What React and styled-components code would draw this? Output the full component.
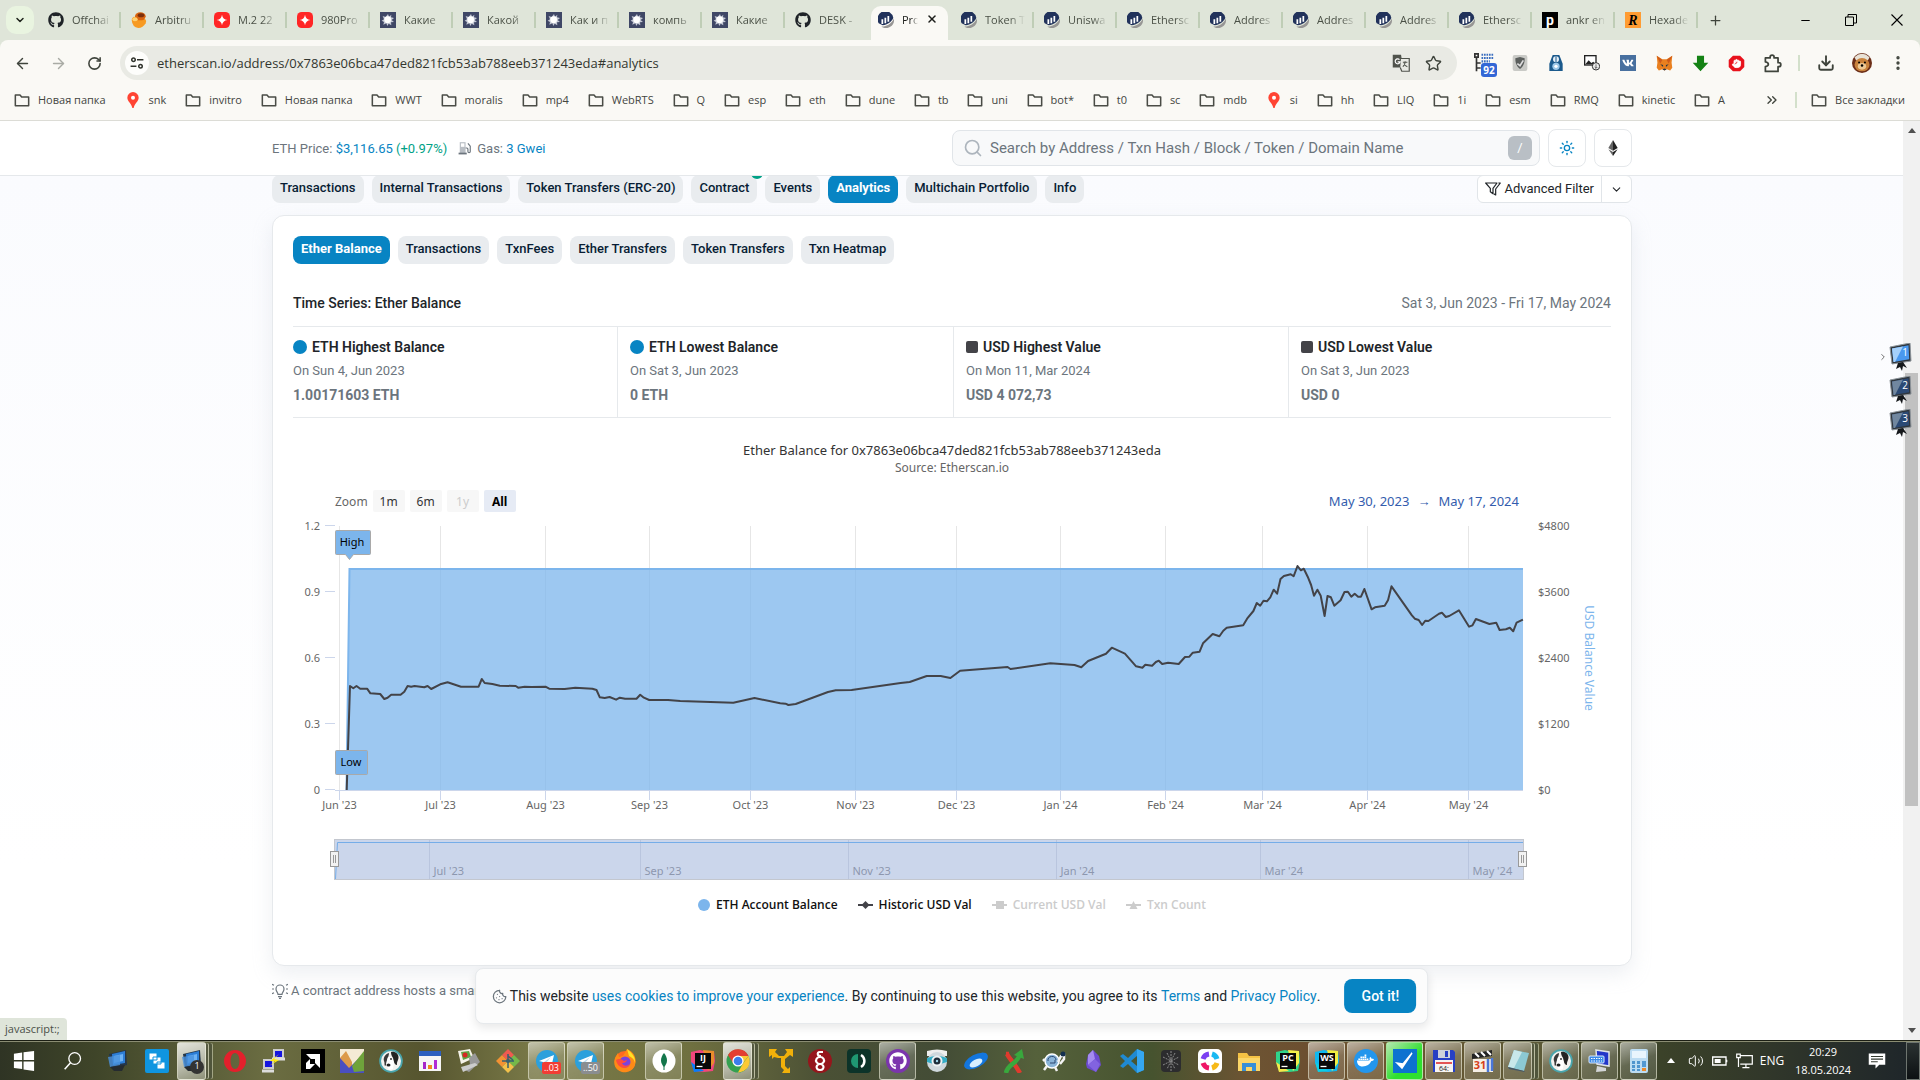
import React from "react";
import styled, { createGlobalStyle, css } from "styled-components";
import {
  ArrowLeft, ArrowRight, RotateCw, ChevronDown, X, Plus, Minus, Star, Download,
  MoreVertical, Search, Sun, Cookie, ChevronsRight, ChevronRight, Volume2, Hand,
} from "lucide-react";
import { FaGithub, FaDocker, FaVk } from "react-icons/fa";

const ui = `"Open Sans", "Noto Sans", sans-serif`;
const site = `Roboto, "Liberation Sans", sans-serif`;
const chartFont = `"Noto Sans", "Open Sans", sans-serif`;

const GlobalStyle = createGlobalStyle`
  *, *::before, *::after { box-sizing: border-box; }
  body { margin: 0; background: #fff; overflow: hidden; }
  button { font: inherit; color: inherit; border: 0; padding: 0; background: none; cursor: pointer; }
  a { text-decoration: none; }
`;

/* ---------- window shell ---------- */

const Desktop = styled.div`
  display: flex;
  flex-direction: column;
  height: 100vh;
  font-family: ${ui};
`;

const TabStrip = styled.div`
  display: flex;
  align-items: stretch;
  height: 40px;
  padding-left: 6px;
  background: #dfe5d9;
`;

const TabSearch = styled.button`
  display: grid;
  place-items: center;
  width: 28px;
  height: 28px;
  margin: 6px 4px 0 0;
  border-radius: 10px;
  background: #e9f4e0;
  color: #1f241c;
`;

const TabShell = styled.div`
  position: relative;
  display: flex;
  align-items: center;
  gap: 8px;
  width: 83px;
  padding-left: 10px;
  font-size: 11px;
  color: #4a5046;
  &::after {
    content: "";
    position: absolute;
    right: 0;
    top: 12px;
    width: 2px;
    height: 16px;
    background: ${(p) => (p.$noRule ? "transparent" : "#bfcdb6")};
  }
  ${(p) => p.$active && css`
    width: 77px;
    margin: 6px 3px 0;
    padding: 0 10px 6px 7px;
    background: #faf9f5;
    border-radius: 10px 10px 0 0;
    color: #1c1e1b;
  `}
`;

const TabTitle = styled.button`
  flex: 1;
  min-width: 0;
  margin-right: ${(p) => (p.$active ? "0" : "9px")};
  overflow: hidden;
  white-space: nowrap;
  text-align: left;
  line-height: 18px;
  mask-image: linear-gradient(90deg, #000 60%, transparent);
`;

const IconButton = styled.button`
  display: grid;
  place-items: center;
  flex: none;
  width: ${(p) => p.$w || 36}px;
  height: ${(p) => p.$h || 36}px;
  color: ${(p) => p.$color || "#3f443c"};
`;

const WindowControls = styled.div`
  display: flex;
  margin-left: auto;
  color: #111;
`;

const ChromeBar = styled.div`
  background: #faf9f5;
  border-bottom: 1px solid #dcdcd6;
  height: 81px;
  border-radius: 8px 8px 0 0;
`;

const ChromeBacking = styled.div`
  background: #dfe5d9;
`;

const NavRow = styled.div`
  display: flex;
  align-items: center;
  height: 46px;
  padding: 0 4px;
`;

const AddressBar = styled.label`
  display: flex;
  align-items: center;
  flex: 1;
  height: 34px;
  margin: 0 9px 0 8px;
  padding: 0 8px 0 5px;
  border-radius: 17px;
  background: #e9eae4;
`;

const SiteInfo = styled.span`
  display: grid;
  place-items: center;
  width: 24px;
  height: 24px;
  margin-right: 8px;
  border-radius: 50%;
  background: #fdfdfb;
`;

const UrlInput = styled.input`
  flex: 1;
  min-width: 0;
  border: 0;
  padding: 0;
  outline: 0;
  background: none;
  font: 13px ${ui};
  color: #33362f;
`;

const Rule = styled.span`
  width: 2px;
  height: 16px;
  margin: 0 ${(p) => p.$m || 8}px;
  background: #d3e0cb;
`;

const ExtIcon = styled.span`
  position: relative;
  display: block;
  width: 20px;
  height: 20px;
`;

const ExtBadge = styled.span`
  position: absolute;
  left: 7px;
  top: 10px;
  width: 16px;
  height: 14px;
  border-radius: 3px;
  background: #3367d6;
  color: #fff;
  font: 700 10px/14px ${ui};
  text-align: center;
`;

const BookmarkRow = styled.div`
  display: flex;
  align-items: center;
  height: 28px;
  padding: 0 15px 0 14px;
`;

const BookmarkList = styled.nav`
  display: flex;
  justify-content: space-between;
  flex: 1;
  margin-right: 38px;
`;

const Bookmark = styled.a`
  display: flex;
  align-items: center;
  gap: 8px;
  font-size: 11px;
  line-height: 16px;
  white-space: nowrap;
  color: #43453f;
`;

/* ---------- page ---------- */

const Viewport = styled.div`
  position: relative;
  display: flex;
  flex: 1;
  min-height: 0;
`;

const Page = styled.div`
  position: relative;
  flex: 1;
  min-width: 0;
  display: flex;
  flex-direction: column;
  font-family: ${site};
  font-size: 14px;
  color: #212529;
  background: #fff;
`;

const Header = styled.header`
  flex: none;
  height: 55px;
  padding-left: 1px;
  border-bottom: 1px solid #e5e8eb;
  background: #fff;
`;

const Container = styled.div`
  max-width: 1360px;
  margin: 0 auto;
`;

const HeaderInner = styled(Container)`
  display: flex;
  align-items: center;
  height: 54px;
`;

const Stat = styled.span`
  display: flex;
  align-items: center;
  gap: 5px;
  margin-right: 11px;
  font-size: 13px;
  white-space: nowrap;
  color: #6c757d;
`;

const Link = styled.a`
  color: ${(p) => p.$color || "#0784c3"};
`;

const SearchBox = styled.label`
  display: flex;
  align-items: center;
  gap: 7px;
  width: 588px;
  height: 36px;
  margin: 0 8px 0 auto;
  padding: 0 7px 0 10px;
  border: 1px solid #e1e5e9;
  border-radius: 8px;
  background: #f8f9fa;
  color: #adb5bd;
`;

const SearchInput = styled.input`
  flex: 1;
  min-width: 0;
  border: 0;
  outline: 0;
  padding: 0;
  background: none;
  font: 15px ${site};
  &::placeholder { color: #6c757d; opacity: 1; }
`;

const Kbd = styled.kbd`
  width: 24px;
  height: 24px;
  border-radius: 6px;
  background: #b9bfc5;
  color: #fff;
  font: 13px/24px ${site};
  text-align: center;
`;

const SquareButton = styled.button`
  display: grid;
  place-items: center;
  width: 38px;
  height: 38px;
  margin-left: ${(p) => (p.$gap ? "8px" : "0")};
  border: 1px solid #e5e8eb;
  border-radius: 8px;
  background: #fff;
  color: #0784c3;
`;

const Body = styled.main`
  flex: 1;
  min-height: 0;
  overflow: hidden;
  padding-left: 1px;
  background: linear-gradient(#fafbfe, #fff 80%);
`;

const Pills = styled.div`
  display: flex;
  gap: 8px;
`;

const Pill = styled.button`
  position: relative;
  height: 28px;
  padding: 0 8px;
  border-radius: 8px;
  background: ${(p) => (p.$active ? "#0784c3" : "#e9ecef")};
  color: ${(p) => (p.$active ? "#fff" : "#081d35")};
  font: ${(p) => (p.$active ? 700 : 500)} 13px/26px ${site};
  padding-bottom: 2px;
  white-space: nowrap;
`;

const Verified = styled.span`
  position: absolute;
  right: -6px;
  top: -8px;
  width: 12px;
  height: 12px;
  border-radius: 50%;
  background: #00a186;
`;

const TopRow = styled.div`
  display: flex;
  justify-content: space-between;
  margin-top: -1px;
`;

const SplitButton = styled.div`
  display: flex;
  height: 28px;
  border: 1px solid #e1e5e9;
  border-radius: 6px;
  background: #fff;
  color: #212529;
  font-size: 13px;
  button { display: flex; align-items: center; gap: 3px; padding: 0 7px 1px; }
  button + button { border-left: 1px solid #e1e5e9; padding: 0 8px; }
`;

const Card = styled.section`
  height: 751px;
  margin-top: 12px;
  padding: 20px;
  border: 1px solid #e6e9ec;
  border-radius: 12px;
  background: #fff;
  box-shadow: 0 8px 19px rgba(189, 197, 209, 0.25);
`;

const SeriesHead = styled.div`
  display: flex;
  justify-content: space-between;
  align-items: center;
  height: 62px;
  padding-top: 16px;
  font-size: 14px;
`;

const SeriesTitle = styled.h2`
  margin: 0;
  font-size: 14px;
  font-weight: 500;
`;

const Muted = styled.span`
  color: #6c757d;
`;

const Figures = styled.div`
  display: grid;
  grid-template-columns: 324fr 336fr 335fr 323fr;
  height: 92px;
  border: solid #e6e9ec;
  border-width: 1px 0;
`;

const Figure = styled.div`
  display: flex;
  flex-direction: column;
  padding: 8px 12px 0;
  line-height: 24px;
  &:first-child { padding-left: 0; }
  & + & { border-left: 1px solid #e6e9ec; }
`;

const FigureName = styled.strong`
  display: flex;
  align-items: center;
  gap: 5px;
  font-size: 14px;
  font-weight: 600;
  &::before {
    content: "";
    width: ${(p) => (p.$square ? 12 : 14)}px;
    height: ${(p) => (p.$square ? 12 : 14)}px;
    border-radius: ${(p) => (p.$square ? "2px" : "50%")};
    background: ${(p) => (p.$square ? "#434348" : "#0784c3")};
  }
`;

const FigureDate = styled.span`
  font-size: 13px;
  color: #6c757d;
`;

const FigureValue = styled.span`
  font-size: 14px;
  font-weight: 700;
  color: #6c757d;
`;

const Chart = styled.figure`
  margin: 0;
  padding-top: 23px;
  font-family: ${chartFont};
`;

const ChartTitle = styled.figcaption`
  text-align: center;
  font-size: 13px;
  line-height: 18px;
  color: #333;
  div + div { font-size: 12px; color: #666; }
`;

const RangeBar = styled.div`
  display: flex;
  align-items: center;
  gap: 5px;
  margin: 13px 92px 2px 42px;
  font-size: 12px;
  color: #666;
`;

const RangeButton = styled.button`
  width: 32px;
  height: 22px;
  border-radius: 2px;
  background: ${(p) => (p.$active ? "#e6ebf5" : "#f7f7f7")};
  color: ${(p) => (p.$active ? "#000" : p.disabled ? "#ccc" : "#333")};
  font-weight: ${(p) => (p.$active ? 700 : 400)};
`;

const DateButtons = styled.div`
  display: flex;
  gap: 8px;
  margin-left: auto;
  font-size: 13px;
  line-height: 20px;
  color: #335cad;
`;

const Plot = styled.svg`
  display: block;
  width: 100%;
  font-family: ${chartFont};
  font-size: 11px;
  fill: #666;
`;

const Legend = styled.div`
  display: flex;
  justify-content: center;
  gap: 20px;
  margin-top: 6px;
`;

const LegendItem = styled.button`
  display: flex;
  align-items: center;
  gap: 6px;
  font: 600 12px/18px ${ui};
  color: ${(p) => (p.$off ? "#ccc" : "#111")};
`;

const Note = styled.p`
  display: flex;
  align-items: center;
  gap: 3px;
  margin: 15px 0 0;
  font-size: 13px;
  line-height: 20px;
  white-space: nowrap;
  color: #6c757d;
`;

const CookieBar = styled.div`
  position: absolute;
  left: 50%;
  bottom: 16px;
  transform: translateX(-50%);
  display: flex;
  align-items: center;
  gap: 24px;
  height: 56px;
  padding: 0 11px 0 16px;
  border: 1px solid #e6e9ec;
  border-radius: 8px;
  background: #fcfcfc;
  box-shadow: 0 4px 10px rgba(0, 0, 0, 0.09);
  white-space: nowrap;
  p { display: flex; align-items: center; margin: 0; font-size: 14px; white-space: pre; }
`;

const Primary = styled.button`
  width: 72px;
  height: 34px;
  border-radius: 8px;
  background: #0784c3;
  color: #fff;
  font-weight: 500;
`;

const StatusBubble = styled.div`
  position: absolute;
  left: 0;
  bottom: 0;
  height: 22px;
  padding: 0 7px 0 5px;
  border-radius: 0 4px 0 0;
  background: #dfe5da;
  color: #4b5048;
  font: 11px/22px ${ui};
`;

const ScrollTrack = styled.div`
  display: flex;
  flex-direction: column;
  justify-content: space-between;
  align-items: center;
  width: 17px;
  padding: 7px 0;
  background: linear-gradient(#c1c1c1, #c1c1c1) 2px 252px / 13px 433px no-repeat #f1f1f1;
`;

const DeskSwitcher = styled.div`
  position: absolute;
  right: 7px;
  top: 222px;
  display: flex;
  flex-direction: column;
  align-items: flex-end;
  gap: 5px;
  span { display: flex; align-items: center; color: #555; }
`;

/* ---------- taskbar ---------- */

const Taskbar = styled.footer`
  display: flex;
  align-items: center;
  height: 40px;
  border-top: 1px solid #1c1f14;
  box-shadow: inset 0 1px 0 #8a8c72;
  background: linear-gradient(90deg, #2f3424 0, #3f4529 5%, #6b6d42 14%, #56552f 22%, #7a7a48 28%, #6f7040 36%,
    #4a5035 43%, #434c36 49%, #55613b 54%, #46532f 60%, #6d5433 65%, #6c4f30 68%, #6b552f 72%, #5d5a37 80%, #3c4329 86%, #31372a 92%, #20272a 99%);
`;

const Cell = styled.button`
  display: grid;
  place-items: center;
  flex: none;
  width: ${(p) => p.$w || 39}px;
  height: 38px;
`;

const Running = styled.span`
  position: relative;
  display: grid;
  place-items: center;
  width: 37px;
  height: 38px;
  border: 1px solid rgba(235, 235, 215, 0.6);
  border-radius: 3px;
  background: ${(p) => p.$green ? "linear-gradient(135deg, #b5e8b0, #2fe02f 60%)"
    : p.$lit ? "linear-gradient(160deg, #e3e4dc, #b5b7a6 60%, #8d9078)"
    : "linear-gradient(160deg, rgba(255,255,255,.55), rgba(255,255,255,.18) 50%, rgba(255,255,255,.12))"};
  ${(p) => p.$stack && css`
    width: 29px;
    margin-right: 8px;
    box-shadow: 3px 0 0 -1px rgba(60, 65, 40, .8), 4px 0 0 -1px #b9bb9f, 7px 0 0 -1px rgba(60, 65, 40, .8), 8px 0 0 -1px #a2a585;
  `}
`;

const CountBadge = styled.span`
  position: absolute;
  right: ${(p) => (p.$round ? 1 : 3)}px;
  bottom: 5px;
  height: ${(p) => (p.$round ? 14 : 12)}px;
  min-width: 14px;
  padding: 0 2px;
  border-radius: ${(p) => (p.$round ? "7px" : "2px")};
  background: ${(p) => p.$bg};
  color: #fff;
  font: 9px/12px ${ui};
`;

const Tray = styled.div`
  display: flex;
  align-items: center;
  margin-left: auto;
  height: 38px;
  color: #fff;
  font-size: 12px;
`;

const Clock = styled.time`
  width: 70px;
  margin-right: 10px;
  text-align: center;
  font-size: 11px;
  line-height: 18px;
`;

const ShowDesktop = styled.button`
  width: 14px;
  height: 38px;
  margin-left: 20px;
  border: 1px solid #6e7570;
  background: linear-gradient(#2b3232, #0c1012);
`;

/* ---------- icons ---------- */

const I = ({ s = 24, children, ...r }) => <svg width={s} height={s} viewBox="0 0 24 24" aria-hidden="true" {...r}>{children}</svg>;

const EtherscanLogo = () => (
  <I s={16}>
    <path d="M1 17A12 12 0 1 1 23 9c-3 6-9 10-16 11" fill="#21325b" />
    <path d="M23.8 10A12 12 0 0 1 5 21.800c9 0 15-5 18.800-11.800z" fill="#979695" />
    <path d="M6.500 11v7M11 8.500v8.500M15.500 6v8.500" stroke="#fff" strokeWidth="2.600" />
  </I>
);
const Spark = () => (
  <I s={16}>
    <rect width="24" height="24" fill="#3f4766" />
    <path d="M12 3l1.500 4L17 4l-.500 4 4.500 1-3.500 3 3.500 3-4.500.500L17 20l-4-2.500L11 21l-1.500-4L5 19l1-4-3.500-2L6 11 4 6l4.500 1.500z" fill="#c6cad6" />
    <circle cx="11.500" cy="11.500" r="5" fill="#fff" />
  </I>
);
const RedStar = () => (
  <I s={16}><rect width="24" height="24" rx="7" fill="#ff2626" /><path d="M12 4q1 7 8 8-7 1-8 8-1-7-8-8 7-1 8-8z" fill="#fff" /></I>
);
const Arbitrum = () => (
  <I s={16}>
    <path d="M1 12q0-3 3-5l17 3q3 3 1 7-4 7-11 7Q2 23 1 12z" fill="#f79a22" />
    <ellipse cx="14" cy="6.500" rx="8" ry="6" fill="#d9630f" />
    <ellipse cx="15" cy="5" rx="5" ry="3" fill="#7c2f0c" /><ellipse cx="6" cy="11" rx="4" ry="3" fill="#ffd070" />
  </I>
);
const LetterIcon = ({ bg, fg, ch, italic }) => (
  <I s={16}>
    <rect width="24" height="24" fill={bg} />
    <text x="12" y="19" textAnchor="middle" fontSize="21" fontWeight="700" fontStyle={italic ? "italic" : "normal"} fontFamily={italic ? "Liberation Serif, serif" : "Roboto, sans-serif"} fill={fg}>{ch}</text>
  </I>
);
const FolderIcon = () => (
  <I s={16}><path d="M2 4.500h7l2.500 3H22v13H2z" fill="none" stroke="#4a4c46" strokeWidth="2.300" strokeLinejoin="round" /></I>
);
const PinIcon = () => (
  <I s={16}><path d="M12 0a8.500 8.500 0 0 0-8.500 8.500C3.500 14 10 17 11 24h2c1-7 7.500-10 7.500-15.500A8.500 8.500 0 0 0 12 0z" fill="#ff4433" /><circle cx="12" cy="8.500" r="3" fill="#fff" /></I>
);
const EthIcon = () => (
  <I s={16}>
    <path d="M12 0L5 12l7 4z" fill="#666" /><path d="M12 0l7 12-7 4z" fill="#222" />
    <path d="M5 14l7 10v-6z" fill="#666" /><path d="M19 14l-7 10v-6z" fill="#222" />
  </I>
);
const PumpIcon = () => (
  <I s={14}>
    <path d="M3 2h10v19H3z" fill="#b9bec4" /><path d="M5 4h6v6H5z" fill="#fff" /><path d="M1 20h14v3H1z" fill="#6c757d" />
    <path d="M13 12h2q2 0 2 2v4q0 2 2 2t2-2V9l-4-5" fill="none" stroke="#6c757d" strokeWidth="2" />
  </I>
);
const FilterIcon = () => (
  <I s={16}>
    <path d="M1 3h17l-6 8v8l-4-3v-5z" fill="none" stroke="#212529" strokeWidth="1.800" strokeLinejoin="round" />
    <path d="M20 3h3l-7 9v9l-3-2" fill="none" stroke="#212529" strokeWidth="1.800" strokeLinejoin="round" />
  </I>
);
const BulbIcon = () => (
  <I s={16}>
    <g fill="none" stroke="#6c757d" strokeWidth="1.800">
      <path d="M9 17c0-3-3-4-3-8a6 6 0 0 1 12 0c0 4-3 5-3 8zM9 20.500h6M10.500 23h3" />
      <path d="M0 2l3 1.500M0 9h3M0 16l3-1.500M24 2l-3 1.500M24 9h-3M24 16l-3-1.500" />
    </g>
  </I>
);
const PuzzleIcon = () => (
  <I s={19}><path d="M3 5h6V4a2.500 2.500 0 0 1 5 0v1h5v6h1a2.500 2.500 0 0 1 0 5h-1v6H3v-6c5-1 5-5 0-6z" fill="none" stroke="#3f443c" strokeWidth="2.200" strokeLinejoin="round" /></I>
);
const TuneIcon = () => (
  <I s={14}><g fill="none" stroke="#30332c" strokeWidth="2.600"><circle cx="6" cy="6.500" r="3" /><path d="M12 6.500h11M1 17.500h10" /><circle cx="18" cy="17.500" r="3" /></g></I>
);
const TranslateIcon = () => (
  <I s={18}>
    <path d="M1 1h11l3 17H1z" fill="#50534c" /><path d="M12 6h11v17H13l-2-5" fill="#e9eae4" stroke="#50534c" strokeWidth="1.600" />
    <path d="M10 7.500a3.300 3.300 0 1 0 .8 3H7.500" fill="none" stroke="#fff" strokeWidth="1.600" />
    <path d="M14.500 11h6M17.500 9.500V11c0 3-2 5-3 6M16 12.500c1 2.500 3 4 4.500 4.500" fill="none" stroke="#50534c" strokeWidth="1.400" />
  </I>
);
const MonitorIcon = ({ n, dim }) => (
  <svg width="25" height="28" viewBox="0 0 25 28" aria-hidden="true">
    <path d="M2 4L22 0l1 18-19 3z" fill="#30363c" stroke="#8d949a" />
    <path d="M4 5.500L20.500 2.300l.7 14L5.500 19z" fill={dim ? "#2c4a75" : "#4a98ee"} />
    <path d="M4 5.500L15 3.400 7 19H5.500z" fill={dim ? "#71879f" : "#a5d0fa"} />
    <path d="M10 20l5-1 4 6-4-2-1 5-2-4-4 2z" fill="#15181b" />
    <text x="17" y="13" textAnchor="middle" fontSize="10" fill="#fff">{n}</text>
  </svg>
);
const Dog = () => (
  <I>
    <circle cx="12" cy="12" r="11.800" fill="#49a5ad" /><circle cx="12" cy="12" r="10" fill="#f3f1ee" />
    <path d="M12 3c4-1 8 2 7.500 6-.5 3-2 4-1.500 7-3 0-3-4-4-7-1-2-2-3-2-6z" fill="#242424" />
    <path d="M10 4C6 5 4 9 5 12c1 2 0 4 1 5 2-1 1.500-4 2-6s2-4 2-7z" fill="#3a3a3a" />
    <path d="M9 8l4 0 2 6-1 6-4 1-2-3-1-3z" fill="#fff" /><ellipse cx="9.500" cy="16" rx="2" ry="1.500" fill="#222" /><circle cx="12" cy="10" r=".9" fill="#222" />
  </I>
);
const BlueMonitors = () => (
  <I>
    <path d="M3 5L20 1l1 15-16 3z" fill="#24364a" /><path d="M6 5l13-3v12L7 16z" fill="#2d7ed6" />
    <path d="M8 7l9-2v7l-9 2z" fill="#6db3f5" /><path d="M2 8l12-2v10L4 18z" fill="#4a92de" opacity=".8" />
    <path d="M4 18l15-2-3 6H8z" fill="#252b30" />
  </I>
);
const Telegram = () => (
  <I><circle cx="12" cy="12" r="11" fill="#2ba0dc" /><path d="M4 12L19 6l-3 13-5-4-2 2-1-4z" fill="#fff" /><path d="M9 13l7-5-5 6-1 3z" fill="#bcdcf0" /></I>
);
const JetBrains = ({ t, a, b, c }) => (
  <I>
    <path d="M0 3L9 1l8 2 6-1 1 10-2 10-9 1-10-1-3-9z" fill={a} /><path d="M12 1l11 1v12l-6 8z" fill={b} /><path d="M0 13l3 10 10-1z" fill={c} />
    <rect x="4" y="4" width="16" height="16" fill="#090909" />
    <text x="12" y="12" textAnchor="middle" fontSize="9" fontWeight="700" fontFamily="Open Sans, sans-serif" fill="#fff">{t}</text>
    <path d="M5.500 17.500h6" stroke="#fff" strokeWidth="1.300" />
  </I>
);
const icons = {
  win: <I s={22}><path d="M1 4l9-1.300V11H1zM11.500 2.500L23 1v10H11.500zM1 12.500h9v8.300L1 19.500zM11.500 12.500H23v10.500l-11.500-1.600z" fill="#fff" /></I>,
  search: <I s={20}><circle cx="14" cy="9" r="7" fill="none" stroke="#fff" strokeWidth="1.600" /><path d="M9 14l-7 8" stroke="#fff" strokeWidth="1.800" /></I>,
  monitors: <BlueMonitors />,
  cascade: <I><rect width="24" height="24" rx="2" fill="#0f95e0" /><path d="M4 4h8v7H4zM8 8h8v7H8zM12 13h8v7h-8z" fill="#fff" stroke="#0f95e0" /></I>,
  opera: <I><path fillRule="evenodd" d="M12 1a11 11 0 1 0 0 22 11 11 0 0 0 0-22zm0 3c3 0 4.500 4 4.500 8s-1.500 8-4.500 8-4.500-4-4.500-8S9 4 12 4z" fill="#e3202c" /></I>,
  putty: <I><path d="M12 1h9v8h-9zM2 11h9v8H2z" fill="#1414e0" stroke="#ccc" strokeWidth="2" /><path d="M10 10h13M0 22h12" stroke="#ddd" strokeWidth="3" /><path d="M17 5l-9 7 5 .5L7 17l10-6-5-1z" fill="#fde910" /></I>,
  amd: <I><rect width="24" height="24" fill="#000" /><path d="M5 5h14v14l-5-5v-4h-4zM9 10v5h5l-5 5H5v-6z" fill="#fff" /></I>,
  zig: <I><rect width="24" height="24" fill="#f4ead5" /><path d="M0 9l6-7 6 11v11H0z" fill="#dc9a4b" /><path d="M0 9l9 10 9-9 6 4v10H0z" fill="#4a4fc0" /><path d="M12 17L24 2v20l-10 1z" fill="#6fa33b" /></I>,
  dog: <Dog />,
  report: <I><rect x="1" y="2" width="22" height="20" fill="#f5f5f5" /><rect x="1" y="2" width="22" height="5" fill="#2c5fbf" /><path d="M5 13h3v7H5z" fill="#a526c9" /><path d="M10 16h4v4h-4z" fill="#f08a1c" /><path d="M16 11h3v9h-3z" fill="#b129d5" /></I>,
  photo: <I><path d="M1 2l12-2 4 9-13 6z" fill="#f5f2e8" /><path d="M4 3l8-1 2 6-8 3z" fill="#5ea244" /><circle cx="8" cy="6" r="2.500" fill="#d72822" /><path d="M12 9l6-5 5 9-11 10-4-2 5-6z" fill="#999" /><path d="M4 18l14-4 3 2-15 7z" fill="#ccc" /></I>,
  git: <I><path d="M12 0l6 6-6 6-6-6z" fill="#ef5a50" /><path d="M6 6l6 6-6 6-6-6z" fill="#f29233" /><path d="M18 6l6 6-6 6-6-6z" fill="#75b94a" /><path d="M12 12l6 6-6 6-6-6z" fill="#f2c14b" /><path d="M12 5v14M6 12h12M12 7l5 4" stroke="#37606f" strokeWidth="1.500" fill="none" /><circle cx="12" cy="12" r="2" fill="#37606f" /></I>,
  telegram: <Telegram />,
  firefox: <I><circle cx="12" cy="12.500" r="10.500" fill="#ff6a21" /><path d="M14 0c7 3 10 9 8 16-2 6-8 8-13 7C2 21 0 15 2 9l3-5 1 4 4-1z" fill="#ff8a16" /><circle cx="12" cy="13" r="5.500" fill="#7a43dc" /><path d="M14 0c5 4 9 8 8 15 0-5-4-7-6-8z" fill="#ffe226" /><path d="M3 11c3-2 6-1 8 1l3-1c-1 3-4 3-5 3 1 3 6 4 8 0-1 7-12 7-14-3z" fill="#ff4c3e" /></I>,
  mongo: <I><circle cx="12" cy="12" r="11.500" fill="#fff" /><path d="M12 4c4 5 4 10 0 14-4-4-4-9 0-14z" fill="#13764b" /><path d="M12 16v5" stroke="#13764b" /></I>,
  ij: <JetBrains t="IJ" a="#f0457d" b="#e88c2c" c="#087cfa" />,
  chrome: <I><circle cx="12" cy="12" r="11.500" fill="#34a050" /><path d="M2 6A11.500 11.500 0 0 1 22.500 7H12L7 14z" fill="#e33e32" /><path d="M22.500 7A11.500 11.500 0 0 1 12 23.500l5-9z" fill="#fcc934" /><path d="M17 14l5.500-7H12z" fill="#fcc934" /><circle cx="12" cy="12" r="5.600" fill="#fff" /><circle cx="12" cy="12" r="4.300" fill="#3b7ded" /></I>,
  arrows: <I><path d="M0 0h8L6 3l4 4h5l3-4-2-3h8v8l-3-2-5 4v7l3 3 2-2v6h-8l2-3-3-3v-9H9L5 8 3 10V6L0 8z" fill="#f2b10a" /></I>,
  serpent: <I><circle cx="12" cy="12" r="12" fill="#96161c" /><path d="M15 3h-3q-3 0-2 3 1 1 3 1M12 8a4 3.500 0 1 0 .1 0M12 15a3.500 3 0 1 0 .1 0" fill="none" stroke="#fff" strokeWidth="2.200" /></I>,
  half: <I><rect width="24" height="24" rx="4" fill="#0c3329" /><path d="M11 5v14a7 7 0 0 1 0-14z" fill="#1f9772" /><path d="M14 6a7 7 0 0 1 0 12" fill="none" stroke="#fff" strokeWidth="2.500" /></I>,
  robot: <I><path d="M2 2q10-3 20 0v5H2z" fill="#eee" /><circle cx="12" cy="13" r="10" fill="#cfd8dd" /><path d="M2 9q10-4 20 0v4q-10 4-20 0z" fill="#36adc6" /><circle cx="12" cy="12" r="5.500" fill="#eef2f4" /><circle cx="12" cy="12" r="3.500" fill="#1d2c3a" /><circle cx="12" cy="12" r="1.200" fill="#9fd4ea" /></I>,
  lens: <I><ellipse cx="12" cy="12" rx="13" ry="6.500" transform="rotate(-28 12 12)" fill="#1376dd" /><ellipse cx="12" cy="14" rx="7" ry="3.500" transform="rotate(-28 12 14)" fill="#d8efff" /></I>,
  cross: <I><path d="M4 5c3 6 7 8 13 19M3 5h3" stroke="#e03a2d" strokeWidth="4.500" fill="none" /><path d="M3 24C5 14 14 16 17 5" stroke="#39a83d" strokeWidth="4.500" fill="none" /><path d="M11 6l8-6 2 10z" fill="#39a83d" /></I>,
  turtle: <I><circle cx="10" cy="12" r="7" fill="#8ab4d8" stroke="#fff" strokeWidth="1.500" /><path d="M6 12a4 4 0 0 1 8-1M8 14h5v-3" stroke="#2c4770" fill="none" /><path d="M16 13l3-6 3-1v4l-4 5M5 17l-3 4M13 18l2 4M3 10l-2 2" stroke="#f3f3f3" strokeWidth="2.500" fill="none" /><circle cx="21" cy="5" r="2.500" fill="#14304f" /></I>,
  obsidian: <I><path d="M12 1l6 6 2 9-5 7-9-4-1-4 2-9z" fill="#6c4bd0" /><path d="M12 1l2 9-7 6 0-10z" fill="#a58bf0" /><path d="M14 10l5 5-4 8-8-7z" fill="#8263e0" /></I>,
  vscode: <I><path fillRule="evenodd" d="M17 0l7 3v18l-7 3-9-9-5 4-3-2 5-5-5-5 3-2 5 4zM17 7l-6 5 6 5z" fill="#1f8ad2" /><path d="M17 0l7 3v18l-7 3z" fill="#35a7f2" /></I>,
  brain: <I><rect x="2" y="1" width="20" height="22" rx="4" fill="#2c2c2e" /><path d="M12 2v20M4 8l16 8M4 16l16-8M8 4l8 16M16 4L8 20" stroke="#8b8b8b" strokeWidth="1" strokeDasharray="2 1" /></I>,
  wheel: <I><rect width="24" height="24" rx="5" fill="#fff" /><g fill="none" strokeWidth="5"><path d="M5 10a7.500 7.500 0 0 1 6-5" stroke="#7c3ff2" /><path d="M14 5a7.500 7.500 0 0 1 5 5" stroke="#19b9f2" /><path d="M19 14a7.500 7.500 0 0 1-5 5" stroke="#f7b917" /><path d="M11 19a7.500 7.500 0 0 1-6-5" stroke="#ef1767" /></g></I>,
  files: <I><path d="M1 4h9l2 3h11v14H1z" fill="#f5c244" /><path d="M1 9h22v13H1z" fill="#fbd668" /><path d="M5 22v-8h14v8h-4v-4H9v4z" fill="#378fd6" /></I>,
  pc: <JetBrains t="PC" a="#2fd58b" b="#f4f04a" c="#f4e94a" />,
  ws: <JetBrains t="WS" a="#10b8f0" b="#f0ee40" c="#0ad0e8" />,
  check: <I><rect width="24" height="24" fill="#0d72d0" /><path d="M4 14l5 5L19 4l-9 11z" fill="#fff" stroke="#fff" strokeWidth="1.500" /></I>,
  floppy: <I><path d="M1 1h20l2 2v20H1z" fill="#2740c4" /><rect x="6" y="1" width="12" height="8" fill="#cdd2da" /><rect x="13" y="2" width="3" height="6" fill="#2740c4" /><rect x="3" y="11" width="18" height="12" fill="#f7f4f0" /><path d="M4 14h16" stroke="#d22" strokeWidth="1.500" /><text x="12" y="22" textAnchor="middle" fontSize="7" fill="#222">64:</text></I>,
  clap: <I><path d="M1 5l20-4v6L1 10z" fill="#222" /><path d="M4 4l4 4M10 3l4 4M16 2l4 4" stroke="#fff" strokeWidth="2" /><rect x="2" y="10" width="20" height="13" fill="#f5efe6" /><text x="9" y="20" textAnchor="middle" fontSize="11" fontWeight="700" fill="#d5401c">31</text><path d="M17 10v13M21 9v13" stroke="#4a77d8" strokeWidth="2.500" /></I>,
  notes: <I><path d="M8 1l15 3-5 18-16-4z" fill="#8cc9d4" /><path d="M8 1l8 2-8 16-6-1z" fill="#c8e7ea" /><path d="M2 18l16 4 1 1-16-3z" fill="#456" /></I>,
  keyboard: <I><path d="M8 1l13 2v14L9 15z" fill="#2236c8" stroke="#dfe3e8" strokeWidth="1.500" /><rect x="1" y="7" width="15" height="7" rx="1" fill="#3a8ae8" stroke="#dceaff" /><path d="M3 9.500h11M3 12h11" stroke="#fff" strokeDasharray="1.500 1" /><path d="M9 17l9 2v3l-10 1z" fill="#d4d6d8" /></I>,
  calc: <I><rect x="3" y="0" width="18" height="24" rx="2" fill="#bcdcf2" /><rect x="5" y="2" width="14" height="7" fill="#e9f5fd" /><path d="M5 12h3v3H5zM10 12h3v3h-3zM5 16h3v3H5zM10 16h3v3h-3zM5 20h3v2H5zM10 20h3v2h-3z" fill="#4f95ce" /><path d="M15 12h4v6h-4z" fill="#5299d2" /><path d="M15 19h4v3h-4z" fill="#eb8b2d" /></I>,
};

/* ---------- data ---------- */

const gh = <FaGithub size={16} color="#1f2328" />;
const tabs = [
  ["Offchai", gh], ["Arbitru", <Arbitrum />], ["M.2 22", <RedStar />], ["980Pro", <RedStar />], ["Какие", <Spark />],
  ["Какой", <Spark />], ["Как и п", <Spark />], ["компь", <Spark />], ["Какие", <Spark />], ["DESK -", gh],
  ["Pro", <EtherscanLogo />], ["Token T", <EtherscanLogo />], ["Uniswa", <EtherscanLogo />], ["Ethersc", <EtherscanLogo />],
  ["Addres", <EtherscanLogo />], ["Addres", <EtherscanLogo />], ["Addres", <EtherscanLogo />], ["Ethersc", <EtherscanLogo />],
  ["ankr en", <LetterIcon bg="#000" fg="#fff" ch="p" />], ["Hexade", <LetterIcon bg="#ff9c33" fg="#000" ch="R" italic />],
];
const ACTIVE = 10;

const bookmarks = ["Новая папка", "snk", "invitro", "Новая папка", "WWT", "moralis", "mp4", "WebRTS", "Q", "esp", "eth", "dune", "tb", "uni",
  "bot*", "t0", "sc", "mdb", "si", "hh", "LIQ", "1i", "esm", "RMQ", "kinetic", "A"];

const extensions = [
  ["Downloader", <ExtIcon><I s={20}><path d="M1 1h4v4H1zM3 5v17M3 12h5M3 18h5" stroke="#333" strokeWidth="2" fill="none" /><path d="M9 2h14M9 6h14M9 10h10" stroke="#3b6fc0" strokeWidth="2.500" strokeDasharray="2 1" /></I><ExtBadge>92</ExtBadge></ExtIcon>],
  ["Shield", <I s={16}><rect x="1" width="22" height="24" rx="3" fill="#c9cac6" /><path d="M5 5l7-2 7 2c0 8-2 12-7 16C7 17 5 13 5 5z" fill="#5b5f5d" /><path d="M8 13l4 3 5-8" stroke="#ddd" strokeWidth="2.500" fill="none" /></I>],
  ["Wallet", <I s={16}><path d="M7 0h10l5 13v11H2V13z" fill="#1b5a8c" /><circle cx="12" cy="6.500" r="4.500" fill="#e5eff7" /><path d="M12 2v9" stroke="#1b5a8c" strokeWidth="1.500" /><circle cx="12" cy="17" r="5.500" fill="#9cc8e8" /><circle cx="12" cy="17" r="2.500" fill="#fff" /></I>],
  ["Images", <I s={16}><rect x="1" y="1" width="17" height="14" fill="#fff" stroke="#222" strokeWidth="2" /><path d="M2 14l5-6 4 4 3-2 3 4z" fill="#222" /><circle cx="18" cy="17" r="5.500" fill="#eee" stroke="#333" strokeWidth="1.500" /><path d="M18 14v6M16 18l2 2 2-2" stroke="#333" fill="none" /></I>],
  ["VK", <I s={16}><rect width="24" height="24" fill="#48709f" /><g transform="translate(3 3)"><FaVk size={18} color="#fff" /></g></I>],
  ["Fox wallet", <I s={17}><path d="M1 1l8 5h6l8-5-1 10 1 7-3 4-5-2-3 2-3-2-5 2-3-4 1-7z" fill="#e9801f" /><path d="M1 1l8 6-3 5zM23 1l-8 6 3 5z" fill="#cf5a1a" /><path d="M6 13l4 1v3zM18 13l-4 1v3zM9 20l3-1 3 1-3 2z" fill="#243447" /></I>],
  ["Save", <I s={17}><path d="M7 1h10v10h6L12 23 1 11h6z" fill="#148214" /></I>],
  ["Adblock", <I s={17}><path d="M7 1h10l6 6v10l-6 6H7l-6-6V7z" fill="#e8121c" /><g transform="translate(5 5)"><Hand size={14} color="#fff" fill="#fff" /></g></I>],
];

const pageTabs = ["Transactions", "Internal Transactions", "Token Transfers (ERC-20)", "Contract", "Events", "Analytics", "Multichain Portfolio", "Info"];
const chartTabs = ["Ether Balance", "Transactions", "TxnFees", "Ether Transfers", "Token Transfers", "Txn Heatmap"];
const figures = [
  ["ETH Highest Balance", "On Sun 4, Jun 2023", "1.00171603 ETH"],
  ["ETH Lowest Balance", "On Sat 3, Jun 2023", "0 ETH"],
  ["USD Highest Value", "On Mon 11, Mar 2024", "USD 4 072,73", true],
  ["USD Lowest Value", "On Sat 3, Jun 2023", "USD 0", true],
];

const months = [[339.5, "Jun '23"], [440.5, "Jul '23"], [545.5, "Aug '23"], [649.5, "Sep '23"], [750.5, "Oct '23"], [855.5, "Nov '23"],
  [956.5, "Dec '23"], [1060.5, "Jan '24"], [1165.5, "Feb '24"], [1262.5, "Mar '24"], [1367.5, "Apr '24"], [1468.5, "May '24"]];
const levels = [[526, "1.2", "$4800"], [592, "0.9", "$3600"], [658, "0.6", "$2400"], [724, "0.3", "$1200"], [790, "0", "$0"]];
const navMonths = [[429.5, "Jul '23"], [640.5, "Sep '23"], [848.5, "Nov '23"], [1056.5, "Jan '24"], [1260.5, "Mar '24"], [1468.5, "May '24"]];

/* Historic USD value: each run has its own sampling step along x. */
const runs = [
  { x0: 270, step: 2.45, pts: "188,1080 196,768 204,775 212,768 221,776 238,776 246,790 270,792 280,807 288,803 297,794 320,794 329,785 337,768 346,770 354,768 378,772 386,768 395,777 417,763 435,757 468,770 511,770 519,747 526,759 545,762 563,767 602,768 608,773 624,770 640,771 675,770 684,776 722,777 748,773 790,776 800,780 808,802 820,804 832,801 848,809 857,803 870,806 898,806 907,794 916,803 929,810 975,810 1005,813 1135,818 1187,804 1250,820 1263,821 1270,825 1288,822 1367,786 1386,781 1425,780 1545,759" },
  { x0: 900, step: 2.063, pts: "20,756 55,738 84,738 104,744 124,722 222,711 228,717 310,700 360,705 374,712 388,693 425,671 437,653 464,671 487,709 500,713 506,704 520,707 528,696 534,692 541,702 553,698 575,702 588,681 597,680 604,668 618,665 625,640 645,612 659,619 667,602 674,593 708,586 716,566 729,543 736,519 743,527 750,512 757,514 764,502 771,479 778,491 785,447 792,438 806,433 812,439 820,408 827,421 833,416 841,440 848,465 854,497 861,479 868,497 876,558 882,498 889,502 896,527 909,511 917,486 924,485 931,500 938,491 945,500 951,500 958,477 973,538 980,532 1000,527 1007,510 1014,469 1056,556 1062,566 1070,570 1077,585 1084,572 1090,573 1112,551 1118,548 1126,561 1133,558 1153,541 1174,590 1181,586 1188,567 1216,582 1230,578 1237,600 1250,598 1258,593 1265,604 1272,578 1285,569" },
];
const usdLine = runs.flatMap((r) => r.pts.split(" ").map((p) => {
  const [x, y] = p.split(",").map(Number);
  return `${(r.x0 + x / r.step).toFixed(1)},${(430 + y / 3).toFixed(1)}`;
})).join(" ");

const taskCells = [
  ["monitors"], ["cascade"], ["monitors", { stack: 1, lit: 1, badge: "1", bg: "#333", round: 1 }], ["opera"], ["putty"], ["amd"], ["zig"], ["dog"], ["report"], ["photo"], ["git"],
  ["telegram", { badge: "..03", bg: "#f23c34" }], ["telegram", { badge: "..50", bg: "#8a8d90" }], ["firefox"], ["mongo", {}], ["ij"], ["chrome", { stack: 1, lit: 1 }],
  ["arrows"], ["serpent"], ["half"], ["github", {}], ["robot"], ["lens"], ["cross"], ["turtle"], ["obsidian"], ["vscode"], ["brain"], ["wheel"], ["files"], ["pc"],
  ["ws", {}], ["docker", {}], ["check", { green: 1 }], ["floppy", {}], ["clap", {}], ["notes", { stack: 1 }], ["dog", {}], ["keyboard", {}], ["calc", {}],
];

const PurpleDisc = styled.span`
  display: grid;
  place-items: center;
  width: 24px;
  height: 24px;
  border-radius: 50%;
  background: #7b35ad;
`;
const BlueDisc = styled(PurpleDisc)`
  background: #2396ed;
`;
const glyph = (name) =>
  name === "github" ? <PurpleDisc><FaGithub size={18} color="#fff" /></PurpleDisc>
  : name === "docker" ? <BlueDisc><FaDocker size={17} color="#fff" /></BlueDisc>
  : icons[name];

/* ---------- sections ---------- */

function BrowserTop() {
  return (
    <ChromeBacking>
      <TabStrip>
        <TabSearch aria-label="Search tabs"><ChevronDown size={12} strokeWidth={3} /></TabSearch>
        {tabs.map(([t, ic], i) => (
          <TabShell key={i} $active={i === ACTIVE} $noRule={i === ACTIVE || i === ACTIVE - 1}>
            {ic}
            <TabTitle $active={i === ACTIVE}>{t}</TabTitle>
            {i === ACTIVE && <button aria-label="Close tab"><X size={12} strokeWidth={3} /></button>}
          </TabShell>
        ))}
        <IconButton aria-label="New tab" $w={34} $h={40}><Plus size={15} /></IconButton>
        <WindowControls>
          <IconButton aria-label="Minimize" $w={46} $h={40} $color="#000"><Minus size={13} strokeWidth={2} /></IconButton>
          <IconButton aria-label="Restore" $w={46} $h={40}><I s={12}><path d="M1 6h16v17H1zM6 6V1h17v17h-6" fill="none" stroke="#000" strokeWidth="2" /></I></IconButton>
          <IconButton aria-label="Close" $w={46} $h={40} $color="#000"><I s={12}><path d="M1 1l22 22M23 1L1 23" stroke="#000" strokeWidth="2.200" /></I></IconButton>
        </WindowControls>
      </TabStrip>
      <ChromeBar>
        <NavRow>
          <IconButton aria-label="Back"><ArrowLeft size={17} /></IconButton>
          <IconButton aria-label="Forward" $color="#a9aba5"><ArrowRight size={17} /></IconButton>
          <IconButton aria-label="Reload"><RotateCw size={15} strokeWidth={2.500} /></IconButton>
          <AddressBar>
            <SiteInfo><TuneIcon /></SiteInfo>
            <UrlInput aria-label="Address" defaultValue="etherscan.io/address/0x7863e06bca47ded821fcb53ab788eeb371243eda#analytics" />
            <IconButton aria-label="Translate" $w={32}><TranslateIcon /></IconButton>
            <IconButton aria-label="Bookmark" $w={32}><Star size={17} /></IconButton>
          </AddressBar>
          {extensions.map(([n, ic]) => <IconButton key={n} aria-label={n}>{ic}</IconButton>)}
          <IconButton aria-label="Extensions"><PuzzleIcon /></IconButton>
          <Rule $m={8} />
          <IconButton aria-label="Downloads"><Download size={18} strokeWidth={2.500} /></IconButton>
          <IconButton aria-label="Profile">
            <I s={20}><circle cx="12" cy="12" r="12" fill="#6b2e18" /><path d="M3 5q9-8 18 0l-2 4H5z" fill="#e8e2d6" /><ellipse cx="12" cy="14" rx="9" ry="8" fill="#c8823c" /><ellipse cx="12" cy="16" rx="5" ry="4" fill="#edc994" /><circle cx="8.500" cy="11.500" r="1.200" /><circle cx="15.500" cy="11.500" r="1.200" /><circle cx="12" cy="15" r="1.500" /></I>
          </IconButton>
          <IconButton aria-label="Menu"><MoreVertical size={18} strokeWidth={2.500} /></IconButton>
        </NavRow>
        <BookmarkRow>
          <BookmarkList>
            {bookmarks.map((b, i) => (
              <Bookmark key={i} href="#">{b === "snk" || b === "si" ? <PinIcon /> : <FolderIcon />}{b}</Bookmark>
            ))}
          </BookmarkList>
          <IconButton aria-label="More bookmarks" $w={18} $h={18}><ChevronsRight size={16} /></IconButton>
          <Rule $m={14} />
          <Bookmark href="#"><FolderIcon />Все закладки</Bookmark>
        </BookmarkRow>
      </ChromeBar>
    </ChromeBacking>
  );
}

function BalancePlot() {
  return (
    <Plot viewBox="293 514 1318 376" role="img" aria-label="Ether balance over time">
      {months.map(([x, t]) => (
        <g key={t}>
          <path d={`M${x} 526V790`} stroke="#e6e6e6" />
          <path d={`M${x} 790v10`} stroke="#ccd6eb" />
          <text x={x} y="809" textAnchor="middle">{t}</text>
        </g>
      ))}
      {levels.map(([y, l, r]) => (
        <g key={l}>
          <path d={`M325 ${y - 0.5}h10`} stroke="#ccd6eb" />
          <text x="320" y={y + 4} textAnchor="end">{l}</text>
          <text x="1538" y={y + 4}>{r}</text>
        </g>
      ))}
      <path d="M346.500 790L349.500 569H1523V790z" fill="#7cb5ec" fillOpacity=".75" />
      <path d="M346.500 790L349.500 569H1523" fill="none" stroke="#7cb5ec" strokeWidth="2" />
      <path d="M335 790.500H1523" stroke="#ccd6eb" />
      <polyline points={usdLine} fill="none" stroke="#434348" strokeWidth="2" strokeLinejoin="round" />
      <path d="M336.500 530.500h33q1 0 1 1v22q0 1-1 1h-16l-4 5-4-5h-9q-1 0-1-1v-22q0-1 1-1z" fill="#7cb5ec" stroke="#a9a9a9" />
      <text x="352" y="546" textAnchor="middle" fill="#000">High</text>
      <rect x="335.500" y="750.500" width="32" height="24" rx="1" fill="#7cb5ec" stroke="#a9a9a9" />
      <text x="351" y="766" textAnchor="middle" fill="#000">Low</text>
      <text transform="translate(1585 658) rotate(90)" textAnchor="middle" fontSize="12" fill="#7cb5ec">USD Balance Value</text>

      <rect x="334.500" y="839.500" width="1189" height="40" fill="#cbd6eb" stroke="#c3c7cf" />
      {navMonths.map(([x, t]) => (
        <g key={t}>
          <path d={`M${x} 840v39`} stroke="#b9c5de" />
          <text x={x + 4} y="875" fill="#8d97ae">{t}</text>
        </g>
      ))}
      <path d="M335.500 879L337.500 842.500H1523" fill="none" stroke="#75ade8" />
      {[334.500, 1522.500].map((x) => (
        <g key={x} stroke="#999">
          <rect x={x - 4} y="851.500" width="8" height="15" fill="#f2f2f2" />
          <path d={`M${x - 1} 855v8M${x + 1} 855v8`} />
        </g>
      ))}
    </Plot>
  );
}

const Marker = ({ d, c }) => <svg width="15" height="10" viewBox="0 0 15 10" aria-hidden="true"><path d="M0 5h15" stroke={c} strokeWidth="2" /><path d={d} fill={c} /></svg>;

function Site() {
  return (
    <Page>
      <Header>
        <HeaderInner>
          <Stat><span>ETH Price: <Link href="#">$3,116.65 <Link as="span" $color="#00a186">(+0.97%)</Link></Link></span></Stat>
          <Stat><PumpIcon /><span>Gas: <Link href="#">3 Gwei</Link></span></Stat>
          <SearchBox>
            <Search size={20} strokeWidth={2} />
            <SearchInput aria-label="Search" placeholder="Search by Address / Txn Hash / Block / Token / Domain Name" />
            <Kbd>/</Kbd>
          </SearchBox>
          <SquareButton aria-label="Theme"><Sun size={16} /></SquareButton>
          <SquareButton aria-label="Network" $gap><EthIcon /></SquareButton>
        </HeaderInner>
      </Header>
      <Body>
        <Container>
          <TopRow>
            <Pills>
              {pageTabs.map((t) => <Pill key={t} $active={t === "Analytics"}>{t}{t === "Contract" && <Verified />}</Pill>)}
            </Pills>
            <SplitButton>
              <button><FilterIcon />Advanced Filter</button>
              <button aria-label="Filter options"><ChevronDown size={13} /></button>
            </SplitButton>
          </TopRow>
          <Card>
            <Pills>
              {chartTabs.map((t, i) => <Pill key={t} $active={i === 0}>{t}</Pill>)}
            </Pills>
            <SeriesHead>
              <SeriesTitle>Time Series: Ether Balance</SeriesTitle>
              <Muted>Sat 3, Jun 2023 - Fri 17, May 2024</Muted>
            </SeriesHead>
            <Figures>
              {figures.map(([n, d, v, sq]) => (
                <Figure key={n}>
                  <FigureName $square={sq}>{n}</FigureName>
                  <FigureDate>{d}</FigureDate>
                  <FigureValue>{v}</FigureValue>
                </Figure>
              ))}
            </Figures>
            <Chart>
              <ChartTitle>
                <div>Ether Balance for 0x7863e06bca47ded821fcb53ab788eeb371243eda</div>
                <div>Source: Etherscan.io</div>
              </ChartTitle>
              <RangeBar>
                <span>Zoom</span>
                <RangeButton>1m</RangeButton>
                <RangeButton>6m</RangeButton>
                <RangeButton disabled>1y</RangeButton>
                <RangeButton $active>All</RangeButton>
                <DateButtons><button>May 30, 2023</button>→<button>May 17, 2024</button></DateButtons>
              </RangeBar>
              <BalancePlot />
              <Legend>
                <LegendItem><I s={12}><circle cx="12" cy="12" r="12" fill="#7cb5ec" /></I>ETH Account Balance</LegendItem>
                <LegendItem><Marker c="#434348" d="M7.500 1l4 4-4 4-4-4z" />Historic USD Val</LegendItem>
                <LegendItem $off><Marker c="#ccc" d="M4 1h8v8H4z" />Current USD Val</LegendItem>
                <LegendItem $off><Marker c="#ccc" d="M7.500 1l4 8h-8z" />Txn Count</LegendItem>
              </Legend>
            </Chart>
          </Card>
          <Note><BulbIcon />A contract address hosts a smar</Note>
        </Container>
      </Body>
      <CookieBar>
        <p><Cookie size={15} color="#6c757d" /> This website <Link href="#">uses cookies to improve your experience</Link>. By continuing to use this website, you agree to its <Link href="#">Terms</Link> and <Link href="#">Privacy Policy</Link>.</p>
        <Primary>Got it!</Primary>
      </CookieBar>
      <StatusBubble>javascript:;</StatusBubble>
    </Page>
  );
}

const Arrow = ({ d, c = "#505050" }) => <svg width="8" height="5" viewBox="0 0 8 5" aria-hidden="true"><path d={d} fill={c} /></svg>;

export default function App() {
  return (
    <Desktop>
      <GlobalStyle />
      <BrowserTop />
      <Viewport>
        <Site />
        <ScrollTrack><Arrow d="M0 5l4-5 4 5z" /><Arrow d="M0 0l4 5 4-5z" /></ScrollTrack>
        <DeskSwitcher><span><ChevronRight size={10} /><MonitorIcon n="1" /></span><MonitorIcon n="2" dim /><MonitorIcon n="3" dim /></DeskSwitcher>
      </Viewport>
      <Taskbar>
        <Cell $w={48} aria-label="Start">{icons.win}</Cell>
        <Cell $w={50} aria-label="Search">{icons.search}</Cell>
        {taskCells.map(([name, run], i) => (
          <Cell key={i} aria-label={name}>
            {run ? (
              <Running $stack={run.stack} $lit={run.lit} $green={run.green}>
                {glyph(name)}
                {run.badge && <CountBadge $bg={run.bg} $round={run.round}>{run.badge}</CountBadge>}
              </Running>
            ) : glyph(name)}
          </Cell>
        ))}
        <Tray>
          <Cell $w={26} aria-label="Hidden icons"><Arrow c="#fff" d="M0 5l4-5 4 5z" /></Cell>
          <Cell $w={24} aria-label="Volume"><Volume2 size={16} strokeWidth={1.500} /></Cell>
          <Cell $w={24} aria-label="Battery"><I s={16}><path d="M1 6h20v12H1zM22 10v4" fill="none" stroke="#fff" strokeWidth="2" /><path d="M4 9h9v6H4z" fill="#fff" /></I></Cell>
          <Cell $w={24} aria-label="Network"><I s={17}><path d="M6 5h17v12H6M14 17v5M9 22h10M1 3h5v5H1zM3.500 8v13" fill="none" stroke="#fff" strokeWidth="1.700" /></I></Cell>
          <Cell $w={32} aria-label="Language">ENG</Cell>
          <Clock>20:29<br />18.05.2024</Clock>
          <I s={18}><path d="M1 2h22v15h-8l-5 5v-5H1z" fill="#fff" /><path d="M4 6h16M4 9.500h16M4 13h9" stroke="#333a30" strokeWidth="1.500" /></I>
          <ShowDesktop aria-label="Show desktop" />
        </Tray>
      </Taskbar>
    </Desktop>
  );
}
